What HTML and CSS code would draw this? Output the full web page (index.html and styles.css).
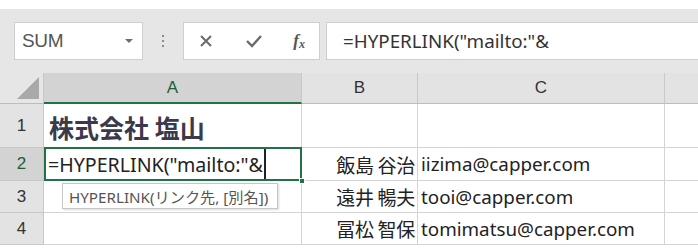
FILE: index.html
```html
<!DOCTYPE html>
<html lang="ja">
<head>
<meta charset="utf-8">
<link rel="stylesheet" href="styles.css">
</head>
<body>
<div class="app">
  <div class="topstrip"></div>
  <div class="toolbar">
    <div class="namebox">
      <span class="name">SUM</span>
      <svg class="dd" width="10" height="6" viewBox="0 0 10 6"><path d="M1 1 L9 1 L5 5 Z" fill="#6d6d6d"/></svg>
    </div>
    <div class="grip"><i></i><i></i><i></i></div>
    <div class="btnbox">
      <svg class="ic" width="16" height="16" viewBox="0 0 16 16"><path d="M3 3 L13 13 M13 3 L3 13" stroke="#6a6a6a" stroke-width="2" fill="none"/></svg>
      <svg class="ic" width="18" height="16" viewBox="0 0 18 16"><path d="M2 8 L7 13 L16 3" stroke="#6a6a6a" stroke-width="2.4" fill="none"/></svg>
      <span class="fx">f<sub>x</sub></span>
    </div>
    <div class="formula">=HYPERLINK("mailto:"&amp;</div>
  </div>
  <div class="sheet">
    <div class="corner"><svg width="24" height="24" viewBox="0 0 24 24"><path d="M23 1 L23 23 L1 23 Z" fill="#a9a9a9"/></svg></div>
    <div class="colh sel">A</div>
    <div class="colh">B</div>
    <div class="colh">C</div>
    <div class="colh last"></div>

    <div class="rowh">1</div>
    <div class="cell title">株式会社 塩山</div>
    <div class="cell"></div>
    <div class="cell"></div>
    <div class="cell last"></div>

    <div class="rowh sel">2</div>
    <div class="cell active">=HYPERLINK("mailto:"&amp;<span class="caret"></span><span class="handle"></span></div>
    <div class="cell name">飯島 谷治</div>
    <div class="cell">iizima@capper.com</div>
    <div class="cell last"></div>

    <div class="rowh">3</div>
    <div class="cell"></div>
    <div class="cell name">遠井 暢夫</div>
    <div class="cell">tooi@capper.com</div>
    <div class="cell last"></div>

    <div class="rowh">4</div>
    <div class="cell"></div>
    <div class="cell name">冨松 智保</div>
    <div class="cell">tomimatsu@capper.com</div>
    <div class="cell last"></div>

    <div class="tip">HYPERLINK(リンク先, [別名])</div>
  </div>
</div>
</body>
</html>
```
FILE: styles.css
```css
* { box-sizing: border-box; }
html, body { margin: 0; padding: 0; background: #fff; }
body { width: 698px; height: 250px; overflow: hidden; font-family: "Noto Sans", "Noto Sans CJK JP", sans-serif; color: #222; }
.app { display: flex; flex-direction: column; }
.topstrip { height: 9px; background: #fff; }
.toolbar {
  height: 64px; background: #e6e6e6;
  display: flex; align-items: flex-start; padding-top: 13px;
}
.namebox {
  margin-left: 14px; width: 129px; height: 38px; background: #fff;
  border: 1px solid #cfcfcf; display: flex; align-items: center; justify-content: space-between;
  padding: 0 8px 0 7px;
}
.name { font-family: "Liberation Sans", sans-serif; font-size: 19px; color: #555; letter-spacing: -0.3px; }
.grip { width: 40px; height: 38px; display: flex; flex-direction: column; align-items: center; justify-content: center; gap: 3px; }
.grip i { display: block; width: 2px; height: 2px; background: #8a8a8a; }
.btnbox {
  width: 137px; height: 38px; background: #fff; border: 1px solid #cfcfcf;
  display: flex; align-items: center; justify-content: space-between; padding: 0 14px 0 14px;
}
.fx { font-family: "Liberation Serif", serif; font-style: italic; font-size: 17px; color: #555; font-weight: bold; }
.fx sub { font-size: 12px; vertical-align: -2px; }
.formula {
  margin-left: 6px; flex: 1; height: 38px; background: #fff; border: 1px solid #cfcfcf; border-right: none;
  display: flex; align-items: center; padding-left: 16px;
  font-size: 18.8px; color: #333; font-family: "Noto Sans", sans-serif;
}
.sheet {
  position: relative;
  display: grid;
  grid-template-columns: 44px 258px 116px 247px 33px;
  grid-template-rows: 31px 44px 33px 32px 32px;
}
.corner { background: #e6e6e6; border-right: 1px solid #c8c8c8; border-bottom: 1px solid #bdbdbd; display: flex; align-items: flex-end; justify-content: flex-end; padding: 0 3px 3px 0; }
.colh {
  background: #e3e3e3; border-right: 1px solid #c8c8c8; border-bottom: 1px solid #bdbdbd;
  display: flex; align-items: center; justify-content: center;
  font-family: "Liberation Sans", sans-serif; font-size: 17px; color: #333;
}
.colh.sel { background: #d3d3d3; border-bottom: 2px solid #217346; color: #1e5e3a; }
.colh.last { border-right: none; }
.rowh {
  background: #e3e3e3; border-right: 1px solid #c8c8c8; border-bottom: 1px solid #c8c8c8;
  display: flex; align-items: center; justify-content: center;
  font-family: "Liberation Sans", sans-serif; font-size: 17px; color: #333;
}
.rowh.sel { background: #d3d3d3; color: #1e5e3a; }
.cell {
  border-right: 1px solid #d4d4d4; border-bottom: 1px solid #d4d4d4;
  display: flex; align-items: center; padding-left: 3px;
  font-size: 18.8px; color: #222; white-space: nowrap;
}
.cell.last { border-right: none; }
.title { font-family: "Noto Sans CJK JP", sans-serif; font-weight: bold; font-size: 25px; color: #3a3a4a; padding-left: 5px; padding-top: 2px; }
.cell.name { justify-content: flex-end; padding-right: 2px; font-family: "Noto Sans CJK JP", sans-serif; font-size: 19px; }
.active {
  position: relative; border: 2px solid #217346; margin: -1px 0 0 0;
  padding-left: 2px; color: #222; font-size: 19.6px;
}
.caret { display: inline-block; width: 2px; height: 30px; background: #222; margin-left: 1px; }
.handle { position: absolute; right: -5px; bottom: -5px; width: 6px; height: 6px; background: #217346; border: 1px solid #fff; }
.tip {
  position: absolute; left: 62px; top: 110px; width: 216px; height: 26px;
  background: #fff; border: 1px solid #c6c6c6; box-shadow: 1px 1px 2px rgba(0,0,0,0.15);
  font-family: "Noto Sans", "Noto Sans CJK JP", sans-serif; font-size: 15.2px; color: #555;
  display: flex; align-items: center; padding-left: 6px; white-space: nowrap;
}
```
